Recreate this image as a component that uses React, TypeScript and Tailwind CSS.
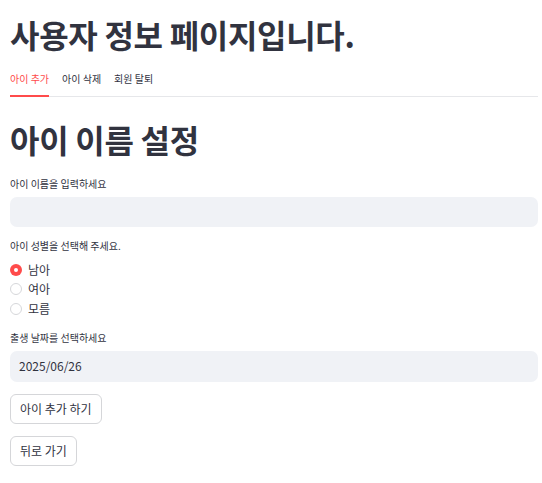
import React, { useState } from 'react';

const tabs = ['아이 추가', '아이 삭제', '회원 탈퇴'];
const genders = ['남아', '여아', '모름'];

const App: React.FC = () => {
  const [tab, setTab] = useState(0);
  const [gender, setGender] = useState(0);

  return (
    <div className="h-[483px] w-full overflow-hidden bg-white text-[#31333f] [font-family:'Noto_Sans_CJK_KR','Noto_Sans',sans-serif]">
      <div className="pl-[10px] pr-[4px] pt-[10px]">
        <h1 className="text-[32px] font-bold leading-[48px] tracking-[-0.3px]">사용자 정보 페이지입니다.</h1>

        {/* tabs */}
        <div className="mt-[2px] flex gap-[13px] border-b border-[#e6e7ea]">
          {tabs.map((t, i) => (
            <button
              key={t}
              onClick={() => setTab(i)}
              className={`-mb-px h-[37px] border-b-2 pt-[1px] text-[10px] ${
                i === tab ? 'border-[#ff4b4b] text-[#ff4b4b]' : 'border-transparent text-[#31333f]'
              }`}
            >
              {t}
            </button>
          ))}
        </div>

        <h2 className="mt-[18px] text-[32px] font-bold leading-[48px] tracking-[-0.3px]">아이 이름 설정</h2>

        <label className="mt-[13px] block text-[10px] leading-[16px]">아이 이름을 입력하세요</label>
        <input className="mt-[5px] block h-[30px] w-full rounded-[7px] bg-[#f0f2f6] px-[9px] text-[12px] outline-none" />

        <p className="mt-[11px] text-[10px] leading-[16px]">아이 성별을 선택해 주세요.</p>
        <div className="mt-[6px] flex flex-col">
          {genders.map((g, i) => (
            <label key={g} className="flex h-[19.5px] cursor-pointer items-center gap-[6px] text-[12px]" onClick={() => setGender(i)}>
              {i === gender ? (
                <span className="flex h-[12px] w-[12px] items-center justify-center rounded-full bg-[#ff4b4b]">
                  <span className="h-[4px] w-[4px] rounded-full bg-white" />
                </span>
              ) : (
                <span className="h-[12px] w-[12px] rounded-full border border-[#d6d7da] bg-white" />
              )}
              {g}
            </label>
          ))}
        </div>

        <p className="mt-[11px] text-[10px] leading-[16px]">출생 날짜를 선택하세요</p>
        <div className="mt-[5px] flex h-[31px] w-full items-center rounded-[7px] bg-[#f0f2f6] px-[9px] text-[12px]">2025/06/26</div>

        <div className="mt-[12px] flex flex-col items-start gap-[12px]">
          <button className="h-[30px] rounded-[6px] border border-[#d5d6d9] bg-white px-[9px] text-[12px]">아이 추가 하기</button>
          <button className="h-[30px] rounded-[6px] border border-[#d5d6d9] bg-white px-[9px] text-[12px]">뒤로 가기</button>
        </div>
      </div>
    </div>
  );
};

export default App;
